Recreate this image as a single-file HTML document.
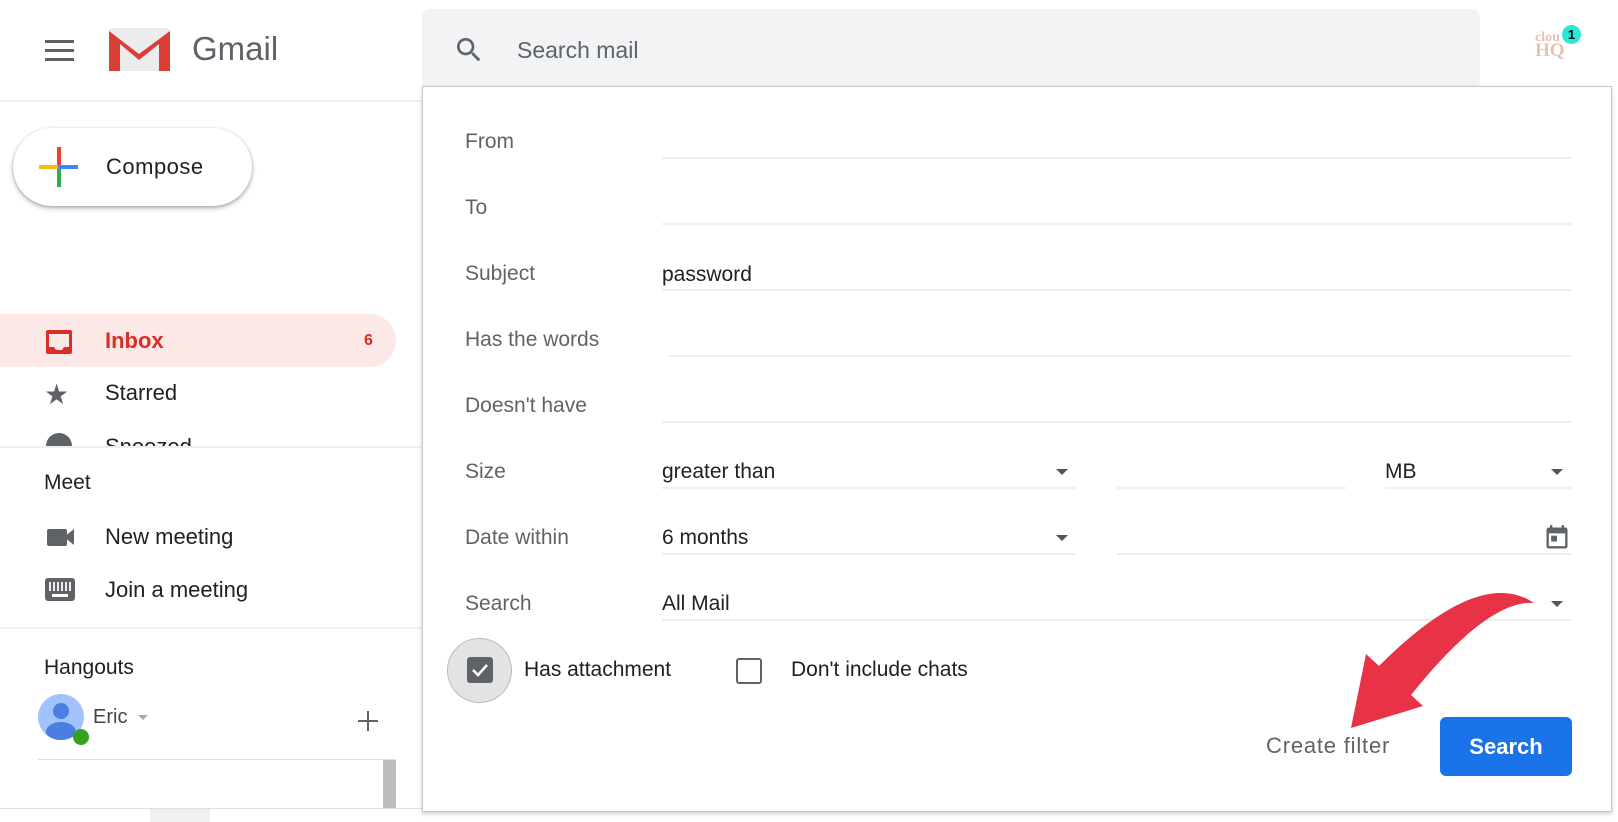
<!DOCTYPE html>
<html><head><meta charset="utf-8"><style>
*{margin:0;padding:0;box-sizing:border-box}
body{width:1618px;height:822px;overflow:hidden;background:#fff;font-family:"Liberation Sans",sans-serif;position:relative}
.a{position:absolute}
.lbl{position:absolute;left:465px;font-size:21px;color:#5f6368;transform:translateY(-50%)}
.ln{position:absolute;height:2px;background:#eceff1}
.val{position:absolute;font-size:21px;color:#202124;transform:translateY(-50%)}
.tri{position:absolute;width:0;height:0;border-left:6px solid transparent;border-right:6px solid transparent;border-top:6px solid #555}
.nav{position:absolute;left:105px;font-size:22px;color:#202124;transform:translateY(-50%)}
</style></head><body>
<div class="a" style="left:45px;top:40px;width:29px;height:3px;background:#5f6368"></div>
<div class="a" style="left:45px;top:49px;width:29px;height:3px;background:#5f6368"></div>
<div class="a" style="left:45px;top:58px;width:29px;height:3px;background:#5f6368"></div>
<svg class="a" style="left:109px;top:28px" width="61" height="43" viewBox="0 0 61 43">
<rect x="0" y="0" width="61" height="43" rx="3" fill="#ececec"/>
<path d="M0 3 L30 26 L61 3 L61 43 L50 43 L50 16 L30 32 L11 16 L11 43 L0 43Z" fill="#d93f35"/>
</svg>
<div class="a" style="left:192px;top:30px;font-size:33px;color:#5f6368">Gmail</div>
<div class="a" style="left:0;top:100px;width:422px;height:2px;background:#eee"></div>
<div class="a" style="left:13px;top:128px;width:239px;height:78px;border-radius:39px;background:#fff;box-shadow:0 1px 3px rgba(0,0,0,.3),0 3px 6px rgba(0,0,0,.15)"></div>
<div class="a" style="left:57px;top:147px;width:4px;height:20px;background:#ea4335"></div>
<div class="a" style="left:57px;top:167px;width:4px;height:20px;background:#34a853"></div>
<div class="a" style="left:39px;top:165px;width:19px;height:4px;background:#fbbc04"></div>
<div class="a" style="left:58px;top:165px;width:20px;height:4px;background:#4285f4"></div>
<div class="a" style="left:106px;top:154px;font-size:22px;color:#202124;letter-spacing:.5px">Compose</div>
<div class="a" style="left:0;top:314px;width:396px;height:53px;background:#fce8e6;border-radius:0 27px 27px 0"></div>
<svg class="a" style="left:45px;top:328px" width="28" height="28" viewBox="0 0 28 28"><path d="M3 2h22a2 2 0 012 2v20a2 2 0 01-2 2H3a2 2 0 01-2-2V4a2 2 0 012-2zm1 4v13h5l2 3h6l2-3h5V6z" fill="#d93025"/></svg>
<div class="nav" style="top:341px;color:#d93025;font-weight:bold">Inbox</div>
<div class="a" style="left:364px;top:332px;font-size:16px;color:#d93025;font-weight:bold">6</div>
<div class="a" style="left:44px;top:378px;font-size:28px;color:#5f6368">★</div>
<div class="nav" style="top:393px">Starred</div>
<div class="a" style="left:46px;top:433px;width:26px;height:26px;border-radius:50%;background:#5f6368"></div>
<div class="nav" style="top:447px">Snoozed</div>
<div class="a" style="left:0;top:446px;width:422px;height:376px;background:#fff;border-top:2px solid #eee"></div>
<div class="a" style="left:44px;top:471px;font-size:21px;color:#202124">Meet</div>
<div class="a" style="left:47px;top:529px;width:20px;height:17px;background:#5f6368;border-radius:2px"></div>
<div class="a" style="left:64px;top:529px;width:0;height:0;border-top:8px solid transparent;border-bottom:8px solid transparent;border-right:10px solid #5f6368"></div>
<div class="nav" style="top:537px">New meeting</div>
<div class="a" style="left:45px;top:578px;width:30px;height:23px;background:#5f6368;border-radius:3px"></div>
<div class="a" style="left:49px;top:582px;width:22px;height:9px;background:repeating-linear-gradient(90deg,#fff 0 2px,transparent 2px 4px);opacity:.9"></div>
<div class="a" style="left:52px;top:594px;width:16px;height:3px;background:#fff"></div>
<div class="nav" style="top:590px">Join a meeting</div>
<div class="a" style="left:0;top:627px;width:422px;height:2px;background:#eef0f2"></div>
<div class="a" style="left:44px;top:656px;font-size:21px;color:#202124">Hangouts</div>
<div class="a" style="left:38px;top:694px;width:46px;height:46px;border-radius:50%;background:#a1c2fa;overflow:hidden">
<div class="a" style="left:15px;top:9px;width:16px;height:16px;border-radius:50%;background:#4a7ee0"></div>
<div class="a" style="left:8px;top:28px;width:30px;height:20px;border-radius:50%;background:#4a7ee0"></div></div>
<div class="a" style="left:73px;top:729px;width:16px;height:16px;border-radius:50%;background:#34a21a"></div>
<div class="a" style="left:93px;top:706px;font-size:20px;color:#444">Eric</div>
<div class="tri" style="left:138px;top:715px;border-top-color:#aaa;border-width:5px"></div>
<div class="a" style="left:358px;top:720px;width:20px;height:2px;background:#5f6368"></div>
<div class="a" style="left:367px;top:711px;width:2px;height:20px;background:#5f6368"></div>
<div class="a" style="left:38px;top:759px;width:358px;height:1px;background:#ddd"></div>
<div class="a" style="left:383px;top:760px;width:13px;height:48px;background:#bdbdbd"></div>
<div class="a" style="left:0;top:808px;width:422px;height:1px;background:#e0e0e0"></div>
<div class="a" style="left:150px;top:809px;width:60px;height:13px;background:#f1f1f1"></div>
<div class="a" style="left:422px;top:9px;width:1058px;height:80px;background:#f1f3f4;border-radius:8px"></div>
<svg class="a" style="left:453px;top:34px" width="32" height="32" viewBox="0 0 24 24"><path d="M15.5 14h-.79l-.28-.27A6.47 6.47 0 0016 9.5 6.5 6.5 0 109.5 16c1.61 0 3.09-.59 4.23-1.57l.27.28v.79l5 4.99L20.49 19l-4.99-5zm-6 0C7.01 14 5 11.99 5 9.5S7.01 5 9.5 5 14 7.01 14 9.5 11.99 14 9.5 14z" fill="#5f6368"/></svg>
<div class="a" style="left:517px;top:37px;font-size:23px;color:#5f6368">Search mail</div>
<div class="a" style="left:1535px;top:31px;font-family:'Liberation Serif',serif;font-weight:bold;font-size:14px;color:#e6c2b0;line-height:13px">clou<br><span style="font-size:19px">HQ</span></div>
<div class="a" style="left:1562px;top:25px;width:19px;height:19px;border-radius:50%;background:#2de6d6;font-size:13px;font-weight:bold;text-align:center;line-height:19px">1</div>
<div class="a" style="left:422px;top:86px;width:1190px;height:726px;background:#fff;border:1px solid #c8c8c8;box-shadow:0 2px 4px rgba(0,0,0,.2)"></div>
<div class="lbl" style="top:142px">From</div><div class="ln" style="left:662px;top:157px;width:910px"></div>
<div class="lbl" style="top:208px">To</div><div class="ln" style="left:662px;top:223px;width:910px"></div>
<div class="lbl" style="top:274px">Subject</div><div class="val" style="left:662px;top:275px">password</div><div class="ln" style="left:662px;top:289px;width:910px"></div>
<div class="lbl" style="top:340px">Has the words</div><div class="ln" style="left:668px;top:355px;width:904px"></div>
<div class="lbl" style="top:406px">Doesn't have</div><div class="ln" style="left:662px;top:421px;width:910px"></div>
<div class="lbl" style="top:472px">Size</div><div class="val" style="left:662px;top:472px">greater than</div><div class="tri" style="left:1056px;top:469px"></div><div class="ln" style="left:662px;top:487px;width:414px"></div>
<div class="ln" style="left:1117px;top:487px;width:229px"></div>
<div class="val" style="left:1385px;top:472px">MB</div><div class="tri" style="left:1551px;top:469px"></div><div class="ln" style="left:1385px;top:487px;width:187px"></div>
<div class="lbl" style="top:538px">Date within</div><div class="val" style="left:662px;top:538px">6 months</div><div class="tri" style="left:1056px;top:535px"></div><div class="ln" style="left:662px;top:553px;width:414px"></div>
<div class="ln" style="left:1117px;top:553px;width:455px"></div>
<svg class="a" style="left:1543px;top:524px" width="28" height="28" viewBox="0 0 24 24"><path d="M19 3h-1V1h-2v2H8V1H6v2H5a2 2 0 00-2 2v14a2 2 0 002 2h14a2 2 0 002-2V5a2 2 0 00-2-2zm0 16H5V8h14v11zM7 10h5v5H7z" fill="#5f6368"/></svg>
<div class="lbl" style="top:604px">Search</div><div class="val" style="left:662px;top:604px">All Mail</div><div class="tri" style="left:1551px;top:601px"></div><div class="ln" style="left:662px;top:619px;width:910px"></div>
<div class="a" style="left:447px;top:638px;width:65px;height:65px;border-radius:50%;background:#e3e3e3;border:1px solid #bbb"></div>
<div class="a" style="left:467px;top:657px;width:26px;height:26px;border-radius:3px;background:#5f6368"></div>
<svg class="a" style="left:467px;top:657px" width="26" height="26" viewBox="0 0 26 26"><path d="M6 13 L11 18 L20 8" stroke="#fff" stroke-width="2.5" fill="none"/></svg>
<div class="val" style="left:524px;top:670px">Has attachment</div>
<div class="a" style="left:736px;top:658px;width:26px;height:26px;border-radius:3px;border:2.5px solid #5f6368"></div>
<div class="val" style="left:791px;top:670px">Don't include chats</div>
<div class="a" style="left:1266px;top:733px;font-size:22px;color:#5f6368;letter-spacing:.8px">Create filter</div>
<div class="a" style="left:1440px;top:717px;width:132px;height:59px;border-radius:6px;background:#1a73e8;color:#fff;font-size:22px;font-weight:bold;text-align:center;line-height:59px">Search</div>
<svg class="a" style="left:0;top:0" width="1618" height="822"><path d="M1534 603 C1500 580 1450 595 1379 666 L1366 654 L1351 728 L1423 706 L1411 695 C1455 640 1500 600 1534 603 Z" fill="#e83245"/></svg>
</body></html>
